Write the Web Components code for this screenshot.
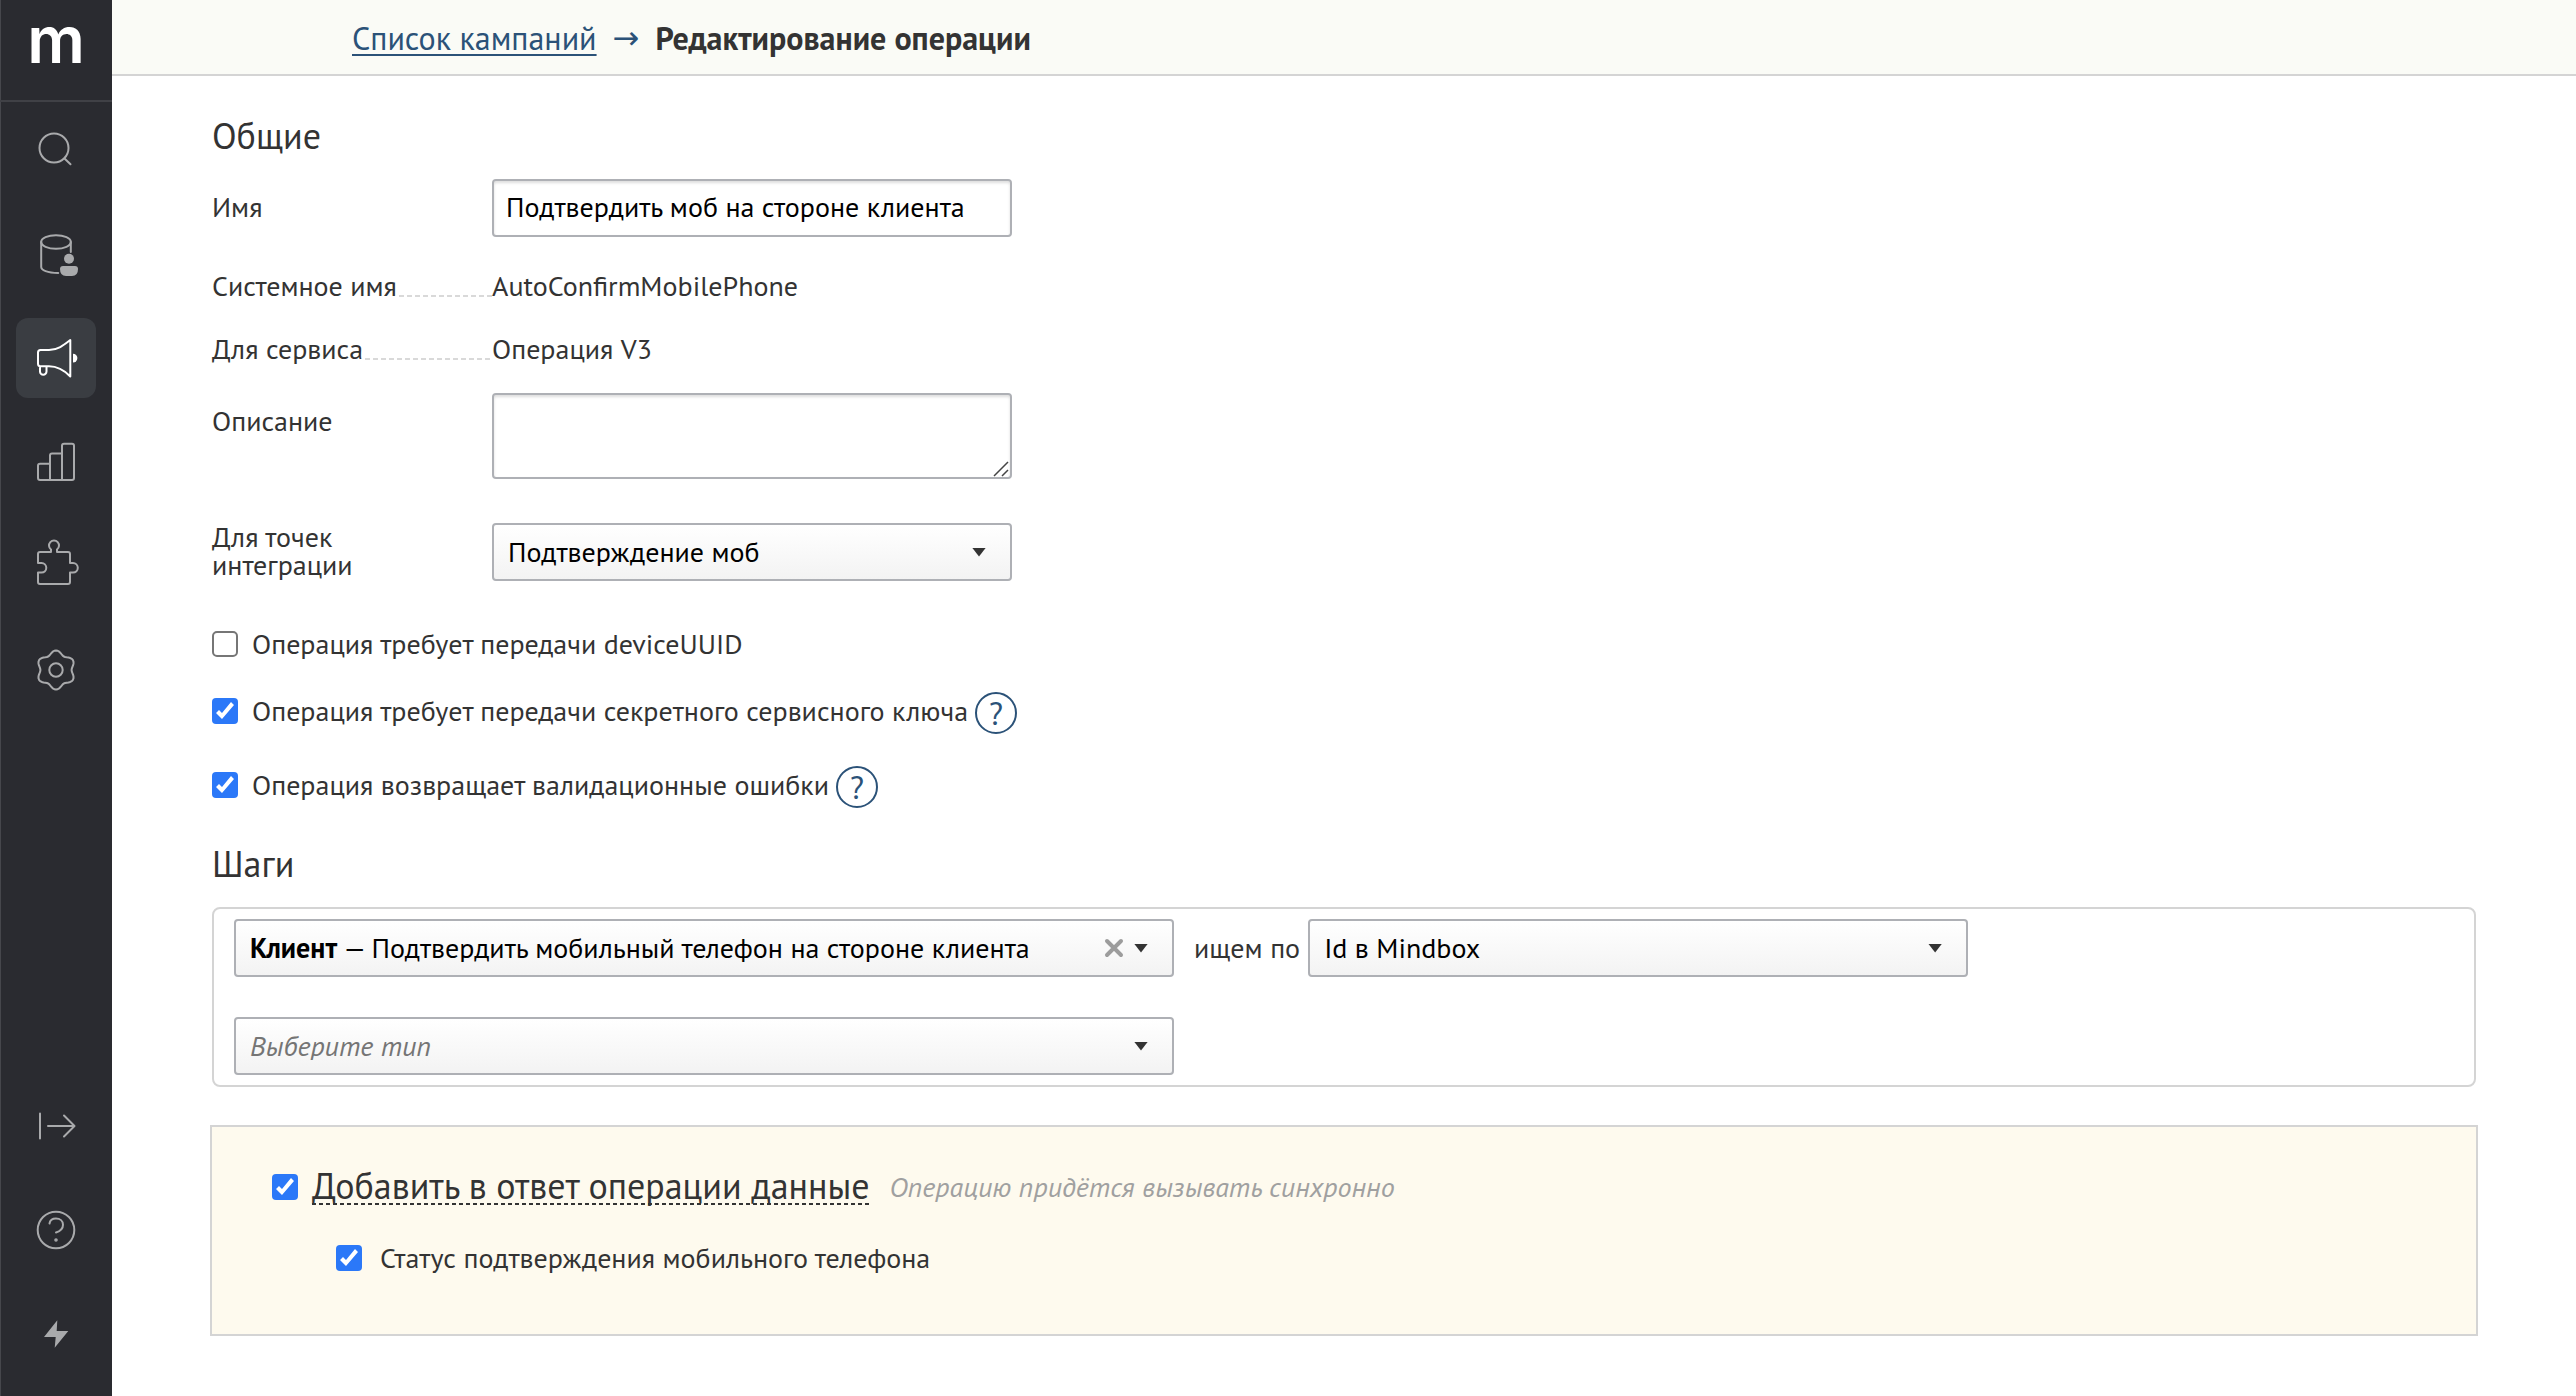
<!DOCTYPE html>
<html lang="ru">
<head>
<meta charset="utf-8">
<title>Редактирование операции</title>
<style>
  html, body { margin: 0; height: 100%; }
  body {
    --text: #333;
    --line: #d4d4d4;
    --field-line: #aeb0b5;
    --link: #2b5278;
    --accent: #2b78f8;
    --large: 32px;
    --title: 36px;
    font: 28px/28px "PT Sans", "Open Sans", "Noto Sans", sans-serif;
    color: var(--text);
    background: #fff;
  }
</style>
</head>
<body>
<app-shell>
  <app-sidebar slot="side"></app-sidebar>
  <page-header slot="head" href="#campaigns" parent="Список кампаний">Редактирование операции</page-header>
  <form-section heading="Общие">
    <field-list>
      <text-field label="Имя" value="Подтвердить моб на стороне клиента"></text-field>
      <static-field label="Системное имя">AutoConfirmMobilePhone</static-field>
      <static-field label="Для сервиса">Операция V3</static-field>
    </field-list>
    <note-field label="Описание"></note-field>
    <select-field label="Для точек интеграции" value="Подтверждение моб"></select-field>
    <check-list>
      <check-item label="Операция требует передачи deviceUUID"></check-item>
      <check-item checked label="Операция требует передачи секретного сервисного ключа"><help-tip></help-tip></check-item>
      <check-item checked label="Операция возвращает валидационные ошибки"><help-tip></help-tip></check-item>
    </check-list>
  </form-section>
  <form-section heading="Шаги">
    <steps-panel></steps-panel>
  </form-section>
  <response-panel></response-panel>
</app-shell>

<script>
const define = (name, html, setup) => {
  const template = document.createElement('template');
  template.innerHTML = html;
  customElements.define(name, class extends HTMLElement {
    constructor() {
      super();
      this.attachShadow({ mode: 'open' }).append(template.content.cloneNode(true));
    }
    connectedCallback() { if (setup) setup(this, s => this.shadowRoot.querySelector(s)); }
  });
};

/* Shared look of form controls */
const control = `
  * { box-sizing: border-box; }
  input, textarea, select, button { font: inherit; color: #000; margin: 0; }
  .box { border: 2px solid var(--field-line); border-radius: 4px; }
`;
const row = `
  :host { display: flex; align-items: center; }
  .label { flex: none; width: 280px; padding: 0 60px 2px 0; box-sizing: border-box; }
`;
const tick = `
  input[type=checkbox] {
    appearance: none; flex: none; width: 26px; height: 26px; margin: 0;
    border: 2px solid #767676; border-radius: 5px; background: #fff;
  }
  input[type=checkbox]:checked { border: 0; border-radius: 4px; background: var(--accent); }
  input[type=checkbox]:checked::before {
    content: ""; display: block; width: 26px; height: 26px; background: #fff;
    clip-path: polygon(4px 15px, 7px 12px, 10px 15px, 19px 4px, 22px 7px, 10px 21px);
  }
`;

define('app-shell', `
  <style>
    :host { display: grid; grid-template-columns: auto 1fr; min-height: 100%; }
    .page { min-width: 0; }
    main { display: flex; flex-direction: column; gap: 36px; padding: 40px 100px 60px; }
  </style>
  <slot name="side"></slot>
  <div class="page"><slot name="head"></slot><main><slot></slot></main></div>
`);

/* Six-lobed outline of the settings gear */
const gear = Array.from({ length: 73 }, (_, i) => {
  const a = i * Math.PI / 36, r = 17.6 - 2 * Math.cos(6 * a);
  return (i ? 'L' : 'M') + (40 + r * Math.cos(a)).toFixed(2) + ' ' + (40 + r * Math.sin(a)).toFixed(2);
}).join('') + 'Z';

const icons = {
  search: '<circle cx="38" cy="38" r="14.5"/><path d="M48.5 48.5L54.5 54.3"/>',
  data: '<ellipse cx="40" cy="28" rx="14.8" ry="6.8"/><path d="M25.2 28V53c0 3 6 6 17 6M54.8 28V38"/><g fill="currentColor" stroke="none"><circle cx="53" cy="44.8" r="5"/><path d="M47 52h12q3 0 3 3q0 7-6 7h-6q-6 0-6-7q0-3 3-3z"/></g>',
  campaigns: '<path d="M24.5 32H33C42 32 48.5 26.5 54.3 22V58.5C48.5 52.5 42 48.3 33 48.3H24.5a2.5 2.5 0 0 1-2.5-2.5V34.5a2.5 2.5 0 0 1 2.5-2.5zM24 48.5V53.5a3 3 0 0 0 6.5 0V48.5"/><path d="M57 35.7a4.4 4.4 0 0 1 0 8.8z" fill="currentColor" stroke="none"/>',
  reports: '<path d="M34 41.7H24a2 2 0 0 0-2 2V56a2 2 0 0 0 2 2H56a2 2 0 0 0 2-2V23.7a2 2 0 0 0-2-2H48a2 2 0 0 0-2 2V58M46 31.5H36a2 2 0 0 0-2 2V58"/>',
  modules: '<path d="M24 26H35V23.5a5 5 0 1 1 6 0V26H52a2 2 0 0 1 2 2V37H57a4.8 4.8 0 1 1 0 9.6H54V56a2 2 0 0 1-2 2H24a2 2 0 0 1-2-2V46.6H25.5a4.8 4.8 0 1 0 0-9.6H22V28a2 2 0 0 1 2-2z"/>',
  settings: `<path d="${gear}"/><circle cx="40" cy="40" r="6.7"/>`,
  expand: '<path d="M24 27.5V52.5M32 40H58M48 29.5L58.5 40L48 50.5"/>',
  help: '<circle cx="40" cy="40" r="18.3"/><path d="M33.5 33.5C34 30.3 36.7 28.5 40 28.5C44 28.5 47 31 47 34.7C47 38.7 44 41.2 40 42.5"/><circle cx="40" cy="50" r=".8"/>',
  quick: '<path d="M41.3 26.3L28 43H39.7L38.7 53.7L52.3 37H40.7z" fill="currentColor" stroke="none"/>'
};

define('side-link', `
  <style>
    :host { display: block; color: #a9aaac; }
    :host([active]) { color: #fff; }
    a { display: block; color: inherit; border-radius: 12px; }
    :host([active]) a { background: #3a3d42; }
    svg { display: block; width: 80px; height: 80px; fill: none; stroke: currentColor; stroke-width: 2; stroke-linecap: round; stroke-linejoin: round; }
  </style>
  <a><svg viewBox="0 0 80 80" aria-hidden="true"></svg></a>
`, (el, $) => {
  $('a').href = '#' + el.getAttribute('icon');
  $('a').setAttribute('aria-label', el.getAttribute('name'));
  $('svg').innerHTML = icons[el.getAttribute('icon')];
});

define('app-sidebar', `
  <style>
    :host { display: flex; flex-direction: column; box-sizing: border-box; width: 112px; padding-bottom: 22px; background: #2a2b30; box-shadow: inset 1px 0 #46474c; }
    .logo { display: flex; justify-content: center; align-items: center; height: 100px; padding-bottom: 20px; box-sizing: border-box; color: #fff; font: 600 64px/60px Inter, sans-serif; text-decoration: none; }
    hr { width: 100%; height: 2px; margin: 0; border: 0; background: #404146; }
    nav { display: flex; flex-direction: column; align-items: center; gap: 24px; padding-top: 8px; }
    .low { margin-top: auto; }
  </style>
  <a class="logo" href="#home">m</a>
  <hr>
  <nav>
    <side-link icon="search" name="Поиск"></side-link>
    <side-link icon="data" name="Клиенты"></side-link>
    <side-link icon="campaigns" name="Кампании" active></side-link>
    <side-link icon="reports" name="Отчёты"></side-link>
    <side-link icon="modules" name="Интеграции"></side-link>
    <side-link icon="settings" name="Настройки"></side-link>
  </nav>
  <nav class="low">
    <side-link icon="expand" name="Развернуть"></side-link>
    <side-link icon="help" name="Помощь"></side-link>
    <side-link icon="quick" name="Быстрые действия"></side-link>
  </nav>
`);

define('page-header', `
  <style>
    :host { display: block; background: #fafbf6; border-bottom: 2px solid var(--line); }
    nav { display: flex; align-items: center; gap: 16px; height: 72px; padding: 2px 240px 0; font-size: var(--large); line-height: 40px; }
    a { color: var(--link); text-decoration: underline; text-decoration-thickness: 2px; text-underline-offset: 4px; }
    .arrow { color: var(--link); font-family: "DejaVu Sans", sans-serif; }
    h1 { margin: 0; font: inherit; font-weight: 700; }
  </style>
  <nav><a></a><span class="arrow">→</span><h1><slot></slot></h1></nav>
`, (el, $) => { $('a').href = el.getAttribute('href'); $('a').textContent = el.getAttribute('parent'); });

define('form-section', `
  <style>
    :host { display: block; }
    h2 { margin: 0 0 23px; font-size: var(--title); font-weight: 400; line-height: 40px; }
  </style>
  <h2></h2><slot></slot>
`, (el, $) => { $('h2').textContent = el.getAttribute('heading'); });

define('field-list', `<style>:host { display: flex; flex-direction: column; gap: 35px; }</style><slot></slot>`);
define('check-list', `<style>:host { display: flex; flex-direction: column; gap: 28px; margin-top: 47px; }</style><slot></slot>`);

define('text-field', `
  <style>${control}${row}
    input { width: 520px; height: 58px; padding: 0 12px 3px; background: #fff; box-shadow: inset 0 2px 3px #0002; }
  </style>
  <label class="label" for="control"></label><input class="box" id="control" type="text">
`, (el, $) => { $('label').textContent = el.getAttribute('label'); $('input').value = el.getAttribute('value'); });

define('note-field', `
  <style>${control}${row}
    :host { align-items: flex-start; margin-top: 30px; }
    .label { padding-top: 14px; }
    textarea { display: block; width: 520px; height: 86px; padding: 8px 12px; background: #fff; box-shadow: inset 0 2px 3px #0002; resize: none; }
    .frame { display: grid; }
    .frame > * { grid-area: 1 / 1; }
    svg { place-self: end; width: 20px; height: 20px; stroke: #444; stroke-width: 1.5; pointer-events: none; }
  </style>
  <label class="label" for="control"></label>
  <div class="frame"><textarea class="box" id="control"></textarea><svg viewBox="0 0 20 20" aria-hidden="true"><path d="M2 17L16 3M10 17L16 11"/></svg></div>
`, (el, $) => { $('label').textContent = el.getAttribute('label'); });

define('static-field', `
  <style>${row}
    .label { display: flex; align-items: flex-end; gap: 2px; padding: 0; }
    .label::after { content: ""; flex: 1; height: 2px; margin-bottom: 3px; background: repeating-linear-gradient(90deg, #d9d9d9 0 5px, transparent 5px 8px); }
  </style>
  <span class="label"></span><span><slot></slot></span>
`, (el, $) => { $('.label').textContent = el.getAttribute('label'); });

const dropStyle = `${control}
  .drop { display: flex; align-items: center; height: 58px; padding: 0 24px 0 14px; background: linear-gradient(#fff, #f3f3f3); }
  .drop select { appearance: none; flex: 1; min-width: 0; height: 54px; padding: 0; border: 0; background: none; }
  .drop b { color: #000; white-space: pre; }
  .caret { flex: none; width: 14px; height: 9px; background: var(--text); clip-path: polygon(0 0, 100% 0, 50% 100%); pointer-events: none; }
  .clear { display: block; flex: none; width: 20px; height: 20px; margin-right: 10px; padding: 0; border: 0; background: none; }
  .clear svg { display: block; width: 20px; height: 20px; stroke: #9c9c9c; stroke-width: 4; stroke-linecap: round; }
`;

define('select-field', `
  <style>${row}${dropStyle}
    :host { margin-top: 44px; }
    .drop { width: 520px; }
  </style>
  <label class="label" for="control"></label>
  <div class="box drop"><select id="control"><option></option></select><span class="caret"></span></div>
`, (el, $) => { $('label').textContent = el.getAttribute('label'); $('option').textContent = el.getAttribute('value'); });

define('help-tip', `
  <style>
    :host { display: block; flex: none; padding-top: 4px; }
    button { display: block; box-sizing: border-box; width: 42px; height: 42px; padding: 0; border: 2px solid var(--link); border-radius: 50%; background: none; color: var(--link); font: inherit; font-size: var(--large); line-height: 36px; }
  </style>
  <button type="button">?</button>
`);

define('check-item', `
  <style>${tick}
    :host { display: flex; align-items: center; gap: 7px; min-height: 32px; }
    label { display: flex; align-items: center; gap: 14px; }
  </style>
  <label><input type="checkbox"><span></span></label><slot></slot>
`, (el, $) => { $('span').textContent = el.getAttribute('label'); $('input').checked = el.hasAttribute('checked'); });

define('steps-panel', `
  <style>${dropStyle}
    :host { display: flex; flex-direction: column; gap: 40px; padding: 10px 20px; border: 2px solid var(--line); border-radius: 8px; }
    .step { display: flex; align-items: center; }
    .type { width: 940px; }
    .key { width: 660px; }
    .by { margin: 0 8px 0 20px; }
    .empty select { color: #757575; font-style: italic; }
  </style>
  <div class="step">
    <div class="box drop type"><b>Клиент </b><select aria-label="Действие"><option>— Подтвердить мобильный телефон на стороне клиента</option></select>
      <button class="clear" type="button" aria-label="Очистить"><svg viewBox="0 0 20 20"><path d="M3 3L17 17M17 3L3 17"/></svg></button><span class="caret"></span></div>
    <label class="by" for="key">ищем по</label>
    <div class="box drop key"><select id="key"><option>Id в Mindbox</option></select><span class="caret"></span></div>
  </div>
  <div class="step">
    <div class="box drop type empty"><select aria-label="Тип шага"><option>Выберите тип</option></select><span class="caret"></span></div>
  </div>
`);

define('response-panel', `
  <style>${tick}
    :host { display: flex; flex-direction: column; gap: 37px; margin: 2px -2px 0; padding: 40px 60px 62px; border: 2px solid var(--line); background: #fefaee; }
    .row { display: flex; align-items: center; gap: 20px; }
    label { display: flex; align-items: center; gap: 14px; }
    .main { font-size: var(--title); line-height: 38px; }
    .main span { padding-bottom: 2px; background: repeating-linear-gradient(90deg, #333 0 4px, transparent 4px 7px) 0 36px / 100% 2px no-repeat; }
    .sub { gap: 18px; margin-left: 64px; }
    i { color: #a0a0a0; }
  </style>
  <div class="row"><label class="main"><input type="checkbox" checked><span>Добавить в ответ операции данные</span></label><i>Операцию придётся вызывать синхронно</i></div>
  <label class="sub"><input type="checkbox" checked><span>Статус подтверждения мобильного телефона</span></label>
`);
</script>
</body>
</html>
